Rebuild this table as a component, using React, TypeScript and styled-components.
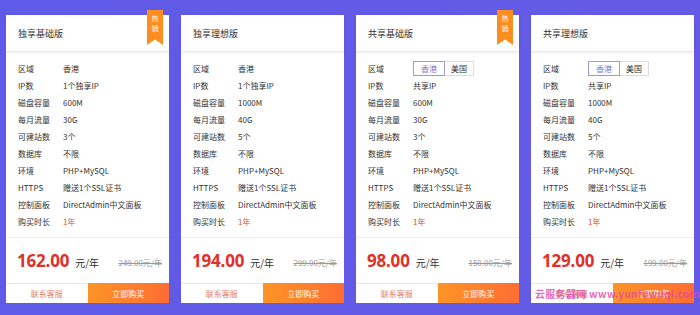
import React from "react";
import styled, { createGlobalStyle } from "styled-components";

const Global = createGlobalStyle`
  html, body { margin: 0; padding: 0; }
  body { background: #625ae7; font-family: "Noto Sans CJK SC", "Noto Sans", sans-serif; }
`;

const Page = styled.div`
  position: relative;
  width: 700px;
  height: 315px;
  box-sizing: border-box;
  padding: 15px 0 0 6px;
  background: linear-gradient(90deg, #5f5be8 0%, #655ae6 100%);
  overflow: hidden;
`;

const Grid = styled.div`
  display: grid;
  grid-template-columns: repeat(4, 163px);
  column-gap: 12px;
`;

const Card = styled.div`
  position: relative;
  height: 288px;
  background: #fff;
  display: flex;
  flex-direction: column;
`;

const Header = styled.div`
  height: 37px;
  display: flex;
  align-items: center;
  padding-left: 12px;
  font-size: 9px;
  color: #333;
  border-bottom: 1px solid #eceaea;
  box-shadow: 0 1px 3px rgba(0, 0, 0, 0.07);
  box-sizing: border-box;
`;

const Ribbon = styled.div`
  position: absolute;
  top: -5px;
  right: 6px;
  width: 16px;
  height: 35px;
  background: #fb8e1e;
  clip-path: polygon(0 0, 100% 0, 100% 100%, 50% 84%, 0 100%);
  color: #fff;
  font-size: 7px;
  line-height: 10px;
  text-align: center;
  padding-top: 3px;
  box-sizing: border-box;
`;

const Body = styled.div`
  padding: 8px 0 7px 12px;
  border-bottom: 1px solid #eeeeee;
`;

const Row = styled.div`
  display: flex;
  align-items: center;
  height: 17px;
  font-size: 8px;
  color: #333;
`;

const Label = styled.span`
  width: 45px;
  flex: none;
`;

const Value = styled.span<{ $accent?: boolean }>`
  color: ${(p) => (p.$accent ? "#e5532d" : "#333")};
`;

const RegionGroup = styled.div`
  display: flex;
`;

const RegionBtn = styled.span<{ $active?: boolean }>`
  display: flex;
  align-items: center;
  justify-content: center;
  height: 15px;
  width: ${(p) => (p.$active ? "32px" : "29px")};
  box-sizing: border-box;
  font-size: 8px;
  border: 1px solid ${(p) => (p.$active ? "#9b97e3" : "#dddddd")};
  border-left-width: ${(p) => (p.$active ? "1px" : "0")};
  color: ${(p) => (p.$active ? "#7c77d6" : "#333")};
`;

const PriceArea = styled.div`
  height: 45px;
  display: flex;
  align-items: center;
  padding: 0 7px 0 11px;
`;

const Price = styled.span`
  font-family: "Noto Sans", "Open Sans", sans-serif;
  font-size: 17px;
  font-weight: 700;
  color: #e0302a;
  letter-spacing: -0.2px;
`;

const Unit = styled.span`
  font-size: 10px;
  color: #333;
  margin-left: 6px;
  margin-top: 3px;
`;

const OldPrice = styled.span`
  margin-left: auto;
  margin-top: 4px;
  font-size: 8px;
  color: #9a9a9a;
  text-decoration: line-through;
`;

const Buttons = styled.div`
  display: grid;
  grid-template-columns: 1fr 1fr;
  height: 20px;
`;

const BtnSecondary = styled.div`
  display: flex;
  align-items: center;
  justify-content: center;
  font-size: 8px;
  color: #e2806f;
  border-top: 1px solid #f1e6e0;
  box-sizing: border-box;
`;

const BtnPrimary = styled.div`
  display: flex;
  align-items: center;
  justify-content: center;
  font-size: 8px;
  color: #fff;
  background: linear-gradient(90deg, #fd9426 0%, #fe6d33 100%);
`;

const Watermark = styled.div`
  position: absolute;
  left: 535px;
  top: 286px;
  font-size: 10px;
  font-weight: 700;
  color: rgba(222, 72, 168, 0.82);
  white-space: nowrap;
  letter-spacing: 0.3px;
  pointer-events: none;
`;

type Plan = {
  title: string;
  hot: boolean;
  multiRegion: boolean;
  ip: string;
  disk: string;
  traffic: string;
  sites: string;
  price: string;
  old: string;
};

const plans: Plan[] = [
  { title: "独享基础版", hot: true, multiRegion: false, ip: "1个独享IP", disk: "600M", traffic: "30G", sites: "3个", price: "162.00", old: "249.00元/年" },
  { title: "独享理想版", hot: false, multiRegion: false, ip: "1个独享IP", disk: "1000M", traffic: "40G", sites: "5个", price: "194.00", old: "299.00元/年" },
  { title: "共享基础版", hot: true, multiRegion: true, ip: "共享IP", disk: "600M", traffic: "30G", sites: "3个", price: "98.00", old: "150.00元/年" },
  { title: "共享理想版", hot: false, multiRegion: true, ip: "共享IP", disk: "1000M", traffic: "40G", sites: "5个", price: "129.00", old: "199.00元/年" },
];

const PlanCard: React.FC<{ plan: Plan }> = ({ plan }) => (
  <Card>
    {plan.hot && (
      <Ribbon>
        热<br />销
      </Ribbon>
    )}
    <Header>{plan.title}</Header>
    <Body>
      <Row>
        <Label>区域</Label>
        {plan.multiRegion ? (
          <RegionGroup>
            <RegionBtn $active>香港</RegionBtn>
            <RegionBtn>美国</RegionBtn>
          </RegionGroup>
        ) : (
          <Value>香港</Value>
        )}
      </Row>
      <Row><Label>IP数</Label><Value>{plan.ip}</Value></Row>
      <Row><Label>磁盘容量</Label><Value>{plan.disk}</Value></Row>
      <Row><Label>每月流量</Label><Value>{plan.traffic}</Value></Row>
      <Row><Label>可建站数</Label><Value>{plan.sites}</Value></Row>
      <Row><Label>数据库</Label><Value>不限</Value></Row>
      <Row><Label>环境</Label><Value>PHP+MySQL</Value></Row>
      <Row><Label>HTTPS</Label><Value>赠送1个SSL证书</Value></Row>
      <Row><Label>控制面板</Label><Value>DirectAdmin中文面板</Value></Row>
      <Row><Label>购买时长</Label><Value $accent>1年</Value></Row>
    </Body>
    <PriceArea>
      <Price>{plan.price}</Price>
      <Unit>元/年</Unit>
      <OldPrice>{plan.old}</OldPrice>
    </PriceArea>
    <Buttons>
      <BtnSecondary>联系客服</BtnSecondary>
      <BtnPrimary>立即购买</BtnPrimary>
    </Buttons>
  </Card>
);

export default function App() {
  return (
    <Page>
      <Global />
      <Grid>
        {plans.map((p) => (
          <PlanCard key={p.title} plan={p} />
        ))}
      </Grid>
      <Watermark>云服务器网 www.yunfuwuqi.com</Watermark>
    </Page>
  );
}
